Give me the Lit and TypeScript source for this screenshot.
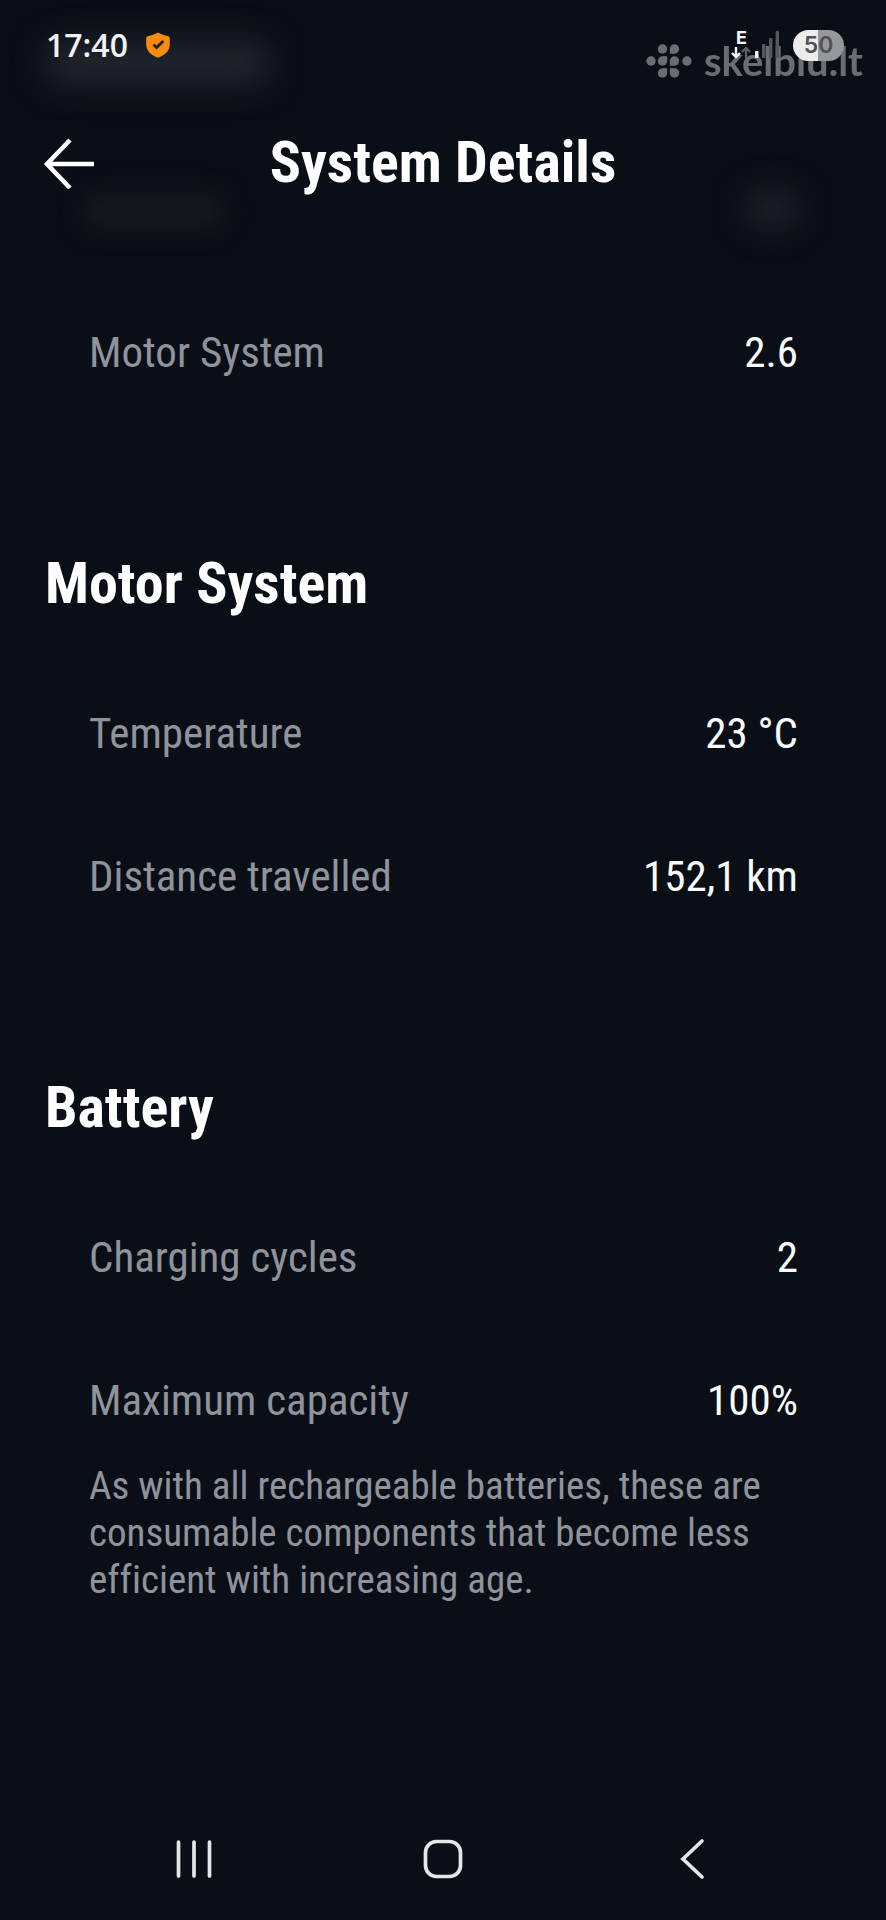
import { LitElement, html, css, svg, nothing } from "lit";
import { customElement, property } from "lit/decorators.js";

interface Detail {
  label: string;
  value: string;
  note?: string;
}

interface Section {
  title?: string;
  rows: Detail[];
}

const SECTIONS: Section[] = [
  { rows: [{ label: "Motor System", value: "2.6" }] },
  {
    title: "Motor System",
    rows: [
      { label: "Temperature", value: "23 °C" },
      { label: "Distance travelled", value: "152,1 km" },
    ],
  },
  {
    title: "Battery",
    rows: [
      { label: "Charging cycles", value: "2" },
      {
        label: "Maximum capacity",
        value: "100%",
        note: "As with all rechargeable batteries, these are consumable components that become less efficient with increasing age.",
      },
    ],
  },
];

@customElement("status-bar")
export class StatusBar extends LitElement {
  static styles = css`
    :host {
      display: flex;
      align-items: center;
      height: 90px;
      padding: 0 42px 0 46px;
      box-sizing: border-box;
      font-family: "Open Sans", "Noto Sans", sans-serif;
      color: #f1f2f4;
    }
    .time {
      font-size: 32px;
      line-height: 40px;
      font-weight: 600;
    }
    .shield {
      width: 24px;
      height: 26px;
      margin-left: 18px;
    }
    .network {
      display: grid;
      grid-template-columns: 24px 24px;
      grid-template-rows: 16px 14px;
      margin-left: auto;
      margin-right: 14px;
    }
    .network-type {
      font-family: Inter, sans-serif;
      font-size: 18px;
      line-height: 16px;
      font-weight: 700;
      padding-left: 5px;
    }
    .signal {
      grid-column: 2;
      grid-row: 1 / 3;
      width: 24px;
      height: 30px;
    }
    .arrows {
      grid-row: 2;
      width: 20px;
      height: 13px;
    }
    .battery {
      width: 51px;
      height: 31px;
      border-radius: 16px;
      background: linear-gradient(to right, #ececed 50%, #979799 50%);
      color: #505154;
      font-family: Inter, sans-serif;
      font-size: 23px;
      line-height: 31px;
      font-weight: 600;
      text-align: center;
    }
  `;

  render() {
    return html`
      <span class="time">17:40</span>
      <svg class="shield" viewBox="0 0 24 26" aria-hidden="true">
        <path
          d="M12 0.5C15 2.2 19 3.4 22 4.2C23.2 4.5 23.8 5.2 23.8 6.4V12.5C23.8 19 18.5 23.5 12 25.7C5.5 23.5 0.2 19 0.2 12.5V6.4C0.2 5.2 0.8 4.5 2 4.2C5 3.4 9 2.2 12 0.5Z"
          fill="#f98c0c"
        />
        <path d="M7.5 12.5L10.6 15.5L17.3 9" fill="none" stroke="#2a1d10" stroke-width="2.8" />
      </svg>
      <span class="network">
        <span class="network-type">E</span>
        <svg class="arrows" viewBox="0 0 20 13" aria-hidden="true">
          <path d="M5 1V11M1 7L5 11L9 7" fill="none" stroke="#f1f2f4" stroke-width="2.4" />
          <path d="M15 12V2M11 6L15 2L19 6" fill="none" stroke="#5d6066" stroke-width="2.2" />
        </svg>
        <svg class="signal" viewBox="0 0 24 30" aria-hidden="true">
          <rect x="0" y="21" width="3.5" height="7" rx="1" fill="#f1f2f4" />
          <rect x="7" y="14" width="3.4" height="14" rx="1" fill="#55595f" />
          <rect x="14" y="8" width="3.4" height="20" rx="1" fill="#55595f" />
          <rect x="20.600" y="1" width="3.4" height="27" rx="1" fill="#55595f" />
        </svg>
      </span>
      <span class="battery">50</span>
    `;
  }
}

@customElement("skelbiu-mark")
export class SkelbiuMark extends LitElement {
  static styles = css`
    :host {
      display: flex;
      align-items: center;
      gap: 12px;
      color: #8a8d93;
      opacity: 0.75;
      font-family: Lato, sans-serif;
      font-size: 40px;
      line-height: 44px;
      font-weight: 700;
    }
    .dots {
      width: 46px;
      height: 34px;
    }
  `;

  render() {
    const dots = [
      [16.5, 5], [28.5, 5],
      [5, 17], [16.5, 17], [28.5, 17], [41, 17],
      [16.5, 29], [28.5, 29],
    ];
    return html`
      <svg class="dots" viewBox="0 0 46 34" aria-hidden="true">
        ${dots.map(([x, y]) => svg`<circle cx=${x} cy=${y} r="4.7" fill="currentColor" />`)}
        <path
          d="M28.5 9.7H23.8V5ZM16.5 12.3H21.2V17ZM28.5 21.7H23.8V17ZM16.5 24.3H21.2V29ZM28.5 24.3H23.8V29Z"
          fill="currentColor"
        />
      </svg>
      <span>skelbiu.lt</span>
    `;
  }
}

@customElement("detail-section")
export class DetailSection extends LitElement {
  @property({ attribute: false }) section: Section = { rows: [] };

  static styles = css`
    :host {
      display: block;
    }
    .title {
      margin: 0;
      padding: 128px 45px 46px;
      font-size: 58px;
      line-height: 64px;
      font-weight: 700;
      color: #ffffff;
    }
    .list {
      margin: 0;
      padding: 0 88px 0 89px;
    }
    .row {
      display: flex;
      align-items: center;
      justify-content: space-between;
      gap: 24px;
      min-height: 143px;
      font-size: 43px;
      line-height: 56px;
    }
    .label {
      color: #8f939b;
    }
    .value {
      margin: 0;
      color: #fafbfc;
    }
    .note {
      margin: -8px 0 0;
      font-size: 39px;
      line-height: 47px;
      color: #8f939b;
    }
  `;

  render() {
    const { title, rows } = this.section;
    return html`
      ${title ? html`<h2 class="title">${title}</h2>` : nothing}
      <dl class="list">
        ${rows.map(
          (r) => html`
            <div class="row">
              <dt class="label">${r.label}</dt>
              <dd class="value">${r.value}</dd>
            </div>
            ${r.note ? html`<dd class="note">${r.note}</dd>` : nothing}
          `,
        )}
      </dl>
    `;
  }
}

@customElement("app-root")
export class AppRoot extends LitElement {
  static styles = css`
    :host {
      display: flex;
      flex-direction: column;
      position: relative;
      min-height: 100vh;
      overflow: hidden;
      background: #0a0f17;
      font-family: "Roboto Condensed", "Liberation Sans Narrow", "Arial Narrow", sans-serif;
      font-variant-ligatures: none;
    }
    .ghost {
      position: absolute;
      border-radius: 20px;
    }
    .ghost-heading {
      left: 45px;
      top: 42px;
      width: 225px;
      height: 42px;
      background: #22272f;
      filter: blur(16px);
    }
    .ghost-label {
      left: 84px;
      top: 194px;
      width: 140px;
      height: 34px;
      background: #151a21;
      filter: blur(12px);
    }
    .ghost-value {
      right: 86px;
      top: 188px;
      width: 56px;
      height: 42px;
      background: #1b1f27;
      filter: blur(14px);
    }
    .status,
    .header {
      position: relative;
    }
    .mark {
      position: absolute;
      top: 39px;
      right: 23px;
    }
    .header {
      display: grid;
      grid-template-columns: 54px 1fr 54px;
      align-items: center;
      padding: 0 43px;
      height: 144px;
      box-sizing: border-box;
    }
    .header-title {
      margin: 0;
      font-size: 58px;
      line-height: 64px;
      font-weight: 700;
      color: #ffffff;
      text-align: center;
    }
    .icon-button {
      display: grid;
      place-items: center;
      padding: 0;
      border: 0;
      background: none;
      color: #e4e6ea;
      cursor: pointer;
    }
    .back {
      justify-items: start;
      color: #ffffff;
    }
    .back svg {
      width: 52px;
      height: 54px;
    }
    .content {
      padding: 46px 0;
    }
    .nav {
      display: grid;
      grid-template-columns: repeat(3, 1fr);
      margin-top: auto;
      height: 122px;
      padding: 0 69px;
    }
    .nav svg {
      width: 42px;
      height: 42px;
    }
  `;

  render() {
    return html`
      <div class="ghost ghost-heading"></div>
      <div class="ghost ghost-label"></div>
      <div class="ghost ghost-value"></div>
      <skelbiu-mark class="mark"></skelbiu-mark>
      <status-bar class="status"></status-bar>
      <header class="header">
        <button class="icon-button back" aria-label="Back">
          <svg viewBox="0 0 52 54" fill="none" stroke="currentColor" stroke-width="4.5" aria-hidden="true">
            <path d="M27 5L4 29L27 53M4 29H51" />
          </svg>
        </button>
        <h1 class="header-title">System Details</h1>
      </header>
      <main class="content">
        ${SECTIONS.map((s) => html`<detail-section .section=${s}></detail-section>`)}
      </main>
      <nav class="nav" aria-label="System navigation">
        <button class="icon-button" aria-label="Recent apps">
          <svg viewBox="0 0 42 42" fill="none" stroke="currentColor" stroke-width="3.7" stroke-linecap="round">
            <path d="M5.5 4V38M21 4V38M36.5 4V38" />
          </svg>
        </button>
        <button class="icon-button" aria-label="Home">
          <svg viewBox="0 0 42 42" fill="none" stroke="currentColor" stroke-width="3.7">
            <rect x="3.5" y="3.5" width="35" height="35" rx="11" />
          </svg>
        </button>
        <button class="icon-button" aria-label="Go back">
          <svg viewBox="0 0 42 42" fill="none" stroke="currentColor" stroke-width="3.7" stroke-linecap="round">
            <path d="M31 3L12 21L31 39" />
          </svg>
        </button>
      </nav>
    `;
  }
}
